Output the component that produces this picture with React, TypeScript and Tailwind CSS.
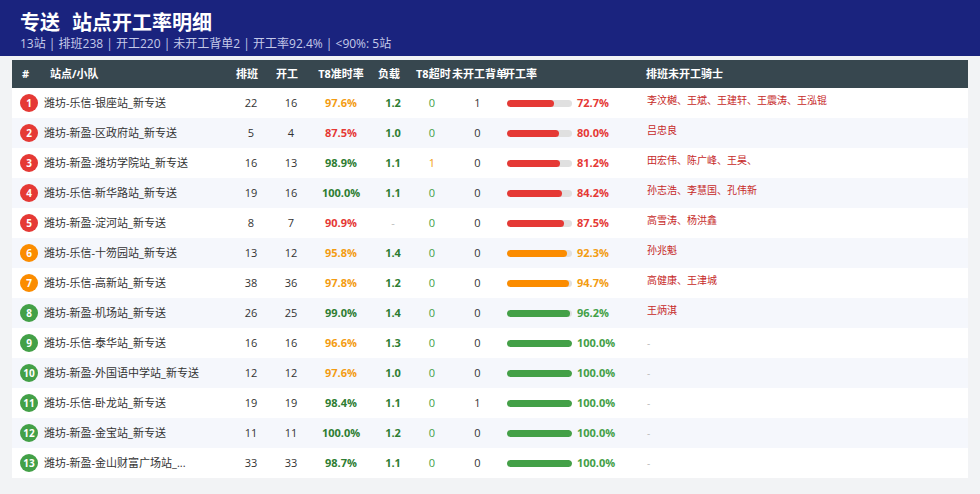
import React from "react"

type Row = {
  name: string
  plan: number
  open: number
  t8: number
  load: string
  overtime: number
  backlog: number
  rate: number
  riders: string
}

const rows: Row[] = [
  { name: "潍坊-乐信-银座站_新专送", plan: 22, open: 16, t8: 97.6, load: "1.2", overtime: 0, backlog: 1, rate: 72.7, riders: "李汶樾、王斌、王建轩、王震涛、王泓锟" },
  { name: "潍坊-新盈-区政府站_新专送", plan: 5, open: 4, t8: 87.5, load: "1.0", overtime: 0, backlog: 0, rate: 80.0, riders: "吕忠良" },
  { name: "潍坊-新盈-潍坊学院站_新专送", plan: 16, open: 13, t8: 98.9, load: "1.1", overtime: 1, backlog: 0, rate: 81.2, riders: "田宏伟、陈广峰、王昊、" },
  { name: "潍坊-乐信-新华路站_新专送", plan: 19, open: 16, t8: 100.0, load: "1.1", overtime: 0, backlog: 0, rate: 84.2, riders: "孙志浩、李慧国、孔伟新" },
  { name: "潍坊-新盈-淀河站_新专送", plan: 8, open: 7, t8: 90.9, load: "-", overtime: 0, backlog: 0, rate: 87.5, riders: "高雪涛、杨洪鑫" },
  { name: "潍坊-乐信-十笏园站_新专送", plan: 13, open: 12, t8: 95.8, load: "1.4", overtime: 0, backlog: 0, rate: 92.3, riders: "孙兆魁" },
  { name: "潍坊-乐信-高新站_新专送", plan: 38, open: 36, t8: 97.8, load: "1.2", overtime: 0, backlog: 0, rate: 94.7, riders: "高健康、王津城" },
  { name: "潍坊-新盈-机场站_新专送", plan: 26, open: 25, t8: 99.0, load: "1.4", overtime: 0, backlog: 0, rate: 96.2, riders: "王炳淇" },
  { name: "潍坊-乐信-泰华站_新专送", plan: 16, open: 16, t8: 96.6, load: "1.3", overtime: 0, backlog: 0, rate: 100.0, riders: "" },
  { name: "潍坊-新盈-外国语中学站_新专送", plan: 12, open: 12, t8: 97.6, load: "1.0", overtime: 0, backlog: 0, rate: 100.0, riders: "" },
  { name: "潍坊-乐信-卧龙站_新专送", plan: 19, open: 19, t8: 98.4, load: "1.1", overtime: 0, backlog: 1, rate: 100.0, riders: "" },
  { name: "潍坊-新盈-金宝站_新专送", plan: 11, open: 11, t8: 100.0, load: "1.2", overtime: 0, backlog: 0, rate: 100.0, riders: "" },
  { name: "潍坊-新盈-金山财富广场站_...", plan: 33, open: 33, t8: 98.7, load: "1.1", overtime: 0, backlog: 0, rate: 100.0, riders: "" },
]

// open-rate tiers: <90 red, <95 orange, else green
function rateTier(v: number) {
  if (v < 90) return "red"
  if (v < 95) return "orange"
  return "green"
}

const badgeBg = { red: "bg-[#e53935]", orange: "bg-[#fb8c00]", green: "bg-[#43a047]" }
const barBg = { red: "bg-[#e53935]", orange: "bg-[#fb8c00]", green: "bg-[#43a047]" }
const rateText = { red: "text-[#e53935]", orange: "text-[#f39c12]", green: "text-[#43a047]" }

function t8Color(v: number) {
  if (v < 95) return "text-[#e53935]"
  if (v < 98) return "text-[#f39c12]"
  return "text-[#2e7d32]"
}

export default function App() {
  return (
    <div className="min-h-[494px] bg-[#f2f3f5] font-['Open_Sans','Noto_Sans_CJK_SC',sans-serif]">
      <div className="h-[56px] bg-[#1a237e] px-5 pt-[10px]">
        <h1 className="flex gap-[12px] text-[20px] leading-[26px] font-bold text-white">
          <span>专送</span>
          <span>站点开工率明细</span>
        </h1>
        <p className="text-[12px] leading-[16px] text-[#c5cae9]">
          13站 | 排班238 | 开工220 | 未开工背单2 | 开工率92.4% | &lt;90%: 5站
        </p>
      </div>

      <div className="px-3 pt-1">
        <table className="w-full table-fixed border-collapse bg-white text-[11px]">
          <colgroup>
            <col className="w-[32px]" />
            <col className="w-[188px]" />
            <col className="w-[38px]" />
            <col className="w-[42px]" />
            <col className="w-[58px]" />
            <col className="w-[46px]" />
            <col className="w-[32px]" />
            <col className="w-[59px]" />
            <col className="w-[133px]" />
            <col />
          </colgroup>
          <thead>
            <tr className="h-[28px] bg-[#37474f] text-white font-bold">
              <th className="pl-[10px] text-left font-bold">#</th>
              <th className="pl-[6px] text-left font-bold">站点/小队</th>
              <th className="pr-[8px] text-center font-bold">排班</th>
              <th className="pr-[8px] text-center font-bold">开工</th>
              <th className="text-center font-bold whitespace-nowrap">T8准时率</th>
              <th className="pr-[8px] text-center font-bold">负载</th>
              <th className="text-center font-bold whitespace-nowrap">T8超时</th>
              <th className="pl-[4px] text-left font-bold whitespace-nowrap overflow-visible">未开工背单</th>
              <th className="text-left font-bold">
                <span className="-ml-[3px]">开工率</span>
              </th>
              <th className="pl-[6px] text-left font-bold">排班未开工骑士</th>
            </tr>
          </thead>
          <tbody>
            {rows.map((r, i) => {
              const tier = rateTier(r.rate)
              return (
                <tr key={i} className={`h-[30px] ${i % 2 === 1 ? "bg-[#f5f7fc]" : "bg-white"}`}>
                  <td className="pl-[8px]">
                    <span
                      className={`flex h-[18px] w-[18px] items-center justify-center rounded-full text-[10px] font-bold text-white ${badgeBg[tier]}`}
                    >
                      {i + 1}
                    </span>
                  </td>
                  <td className="truncate text-[#333]">{r.name}</td>
                  <td className="text-center text-[#333]">{r.plan}</td>
                  <td className="text-center text-[#333]">{r.open}</td>
                  <td className={`text-center font-bold ${t8Color(r.t8)}`}>{r.t8.toFixed(1)}%</td>
                  <td className={`text-center font-bold ${r.load === "-" ? "text-[#bbb] font-normal" : "text-[#2e7d32]"}`}>
                    {r.load}
                  </td>
                  <td className={`text-center ${r.overtime > 0 ? "text-[#f39c12]" : "text-[#43a047]"}`}>{r.overtime}</td>
                  <td className="text-center text-[#333]">{r.backlog}</td>
                  <td>
                    <div className="flex items-center gap-[5px]">
                      <div className="h-[7px] w-[65px] overflow-hidden rounded-full bg-[#e0e0e0]">
                        <div className={`h-full rounded-full ${barBg[tier]}`} style={{ width: `${r.rate}%` }} />
                      </div>
                      <span className={`font-bold ${rateText[tier]}`}>{r.rate.toFixed(1)}%</span>
                    </div>
                  </td>
                  <td className="pl-[7px]">
                    {r.riders ? (
                      <div className="mb-[6px] text-[10px] leading-[13px] text-[#c62828]">{r.riders}</div>
                    ) : (
                      <span className="text-[10px] text-[#bbb]">-</span>
                    )}
                  </td>
                </tr>
              )
            })}
          </tbody>
        </table>
      </div>
    </div>
  )
}
